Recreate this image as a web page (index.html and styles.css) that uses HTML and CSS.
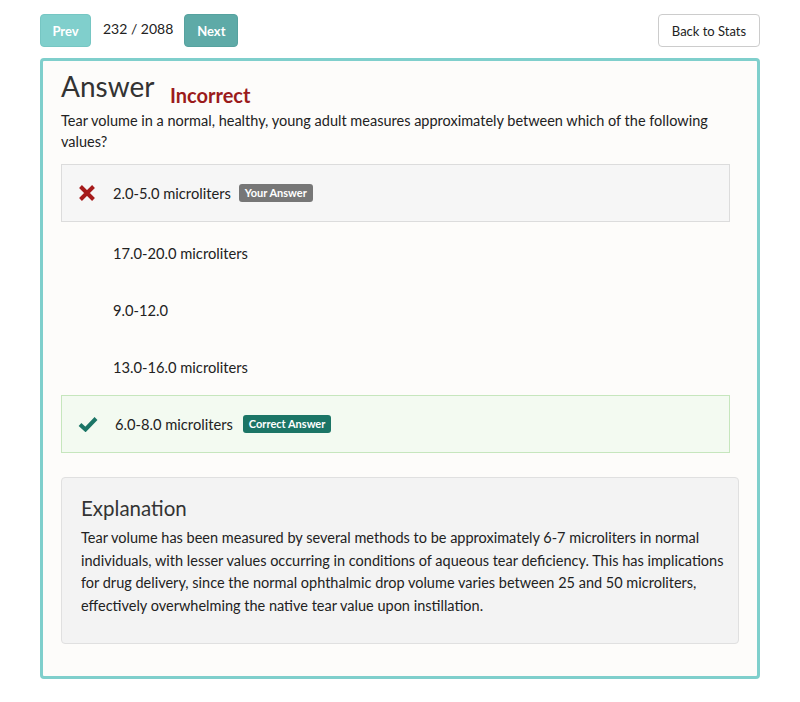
FILE: index.html
```html
<!DOCTYPE html>
<html>
<head>
<meta charset="utf-8">
<link rel="stylesheet" href="styles.css">
</head>
<body>
<div class="page">
  <div class="topbar">
    <div class="pager">
      <button class="btn btn-prev">Prev</button>
      <span class="count">232 / 2088</span>
      <button class="btn btn-next">Next</button>
    </div>
    <button class="btn btn-back">Back to Stats</button>
  </div>
  <div class="card">
    <h1 class="title">Answer <span class="status">Incorrect</span></h1>
    <p class="question">Tear volume in a normal, healthy, young adult measures approximately between which of the following values?</p>
    <div class="options">
      <div class="option boxed wrong">
        <span class="icon"><svg width="18" height="16" viewBox="0 0 18 16"><path d="M2.5 1.5 L15.5 14.5 M15.5 1.5 L2.5 14.5" stroke="#a61b1b" stroke-width="4" stroke-linecap="butt" fill="none"/></svg></span>
        <span class="text">2.0-5.0 microliters</span>
        <span class="label label-gray">Your Answer</span>
      </div>
      <div class="option first-plain"><span class="icon"></span><span class="text">17.0-20.0 microliters</span></div>
      <div class="option"><span class="icon"></span><span class="text">9.0-12.0</span></div>
      <div class="option"><span class="icon"></span><span class="text">13.0-16.0 microliters</span></div>
      <div class="option boxed right">
        <span class="icon"><svg width="20" height="16" viewBox="0 0 20 16"><path d="M2 8.5 L7.5 13.5 L18 2.5" stroke="#1b7566" stroke-width="4" fill="none"/></svg></span>
        <span class="text">6.0-8.0 microliters</span>
        <span class="label label-green">Correct Answer</span>
      </div>
    </div>
    <div class="explain">
      <h2>Explanation</h2>
      <p>Tear volume has been measured by several methods to be approximately 6-7 microliters in normal<br>individuals, with lesser values occurring in conditions of aqueous tear deficiency. This has implications<br>for drug delivery, since the normal ophthalmic drop volume varies between 25 and 50 microliters,<br>effectively overwhelming the native tear value upon instillation.</p>
    </div>
  </div>
</div>
</body>
</html>
```
FILE: styles.css
```css
* { box-sizing: border-box; }
body {
  margin: 0;
  background: #ffffff;
  font-family: Lato, "Open Sans", sans-serif;
  color: #222;
}
.page {
  padding: 14px 40px 24px 40px;
}
.topbar {
  display: flex;
  justify-content: space-between;
  align-items: center;
  height: 33px;
}
.pager {
  display: flex;
  align-items: center;
}
.btn {
  height: 33px;
  border-radius: 4px;
  font-family: Lato, sans-serif;
  font-size: 13px;
  padding: 0 12px;
  cursor: pointer;
}
.btn-prev {
  background: #80cfcc;
  border: 1px solid #76c6c3;
  color: #fff;
  font-weight: bold;
  width: 51px;
  padding: 0;
}
.btn-next {
  background: #5eaaa7;
  border: 1px solid #56a29f;
  color: #fff;
  font-weight: bold;
  width: 54px;
  padding: 0;
}
.count {
  font-size: 14px;
  color: #222;
  margin: 0 11px 0 12px;
  position: relative;
  top: -2px;
}
.btn-back {
  background: #fff;
  border: 1px solid #cccccc;
  color: #222;
  width: 102px;
  padding: 0;
}
.card {
  margin-top: 11px;
  border: 3px solid #7fcfcc;
  border-radius: 4px;
  background: #fdfcfa;
  padding: 9px 18px 32px 18px;
}
.title {
  margin: 0;
  font-size: 28px;
  font-weight: normal;
  line-height: 33px;
  color: #333;
}
.status {
  font-size: 20px;
  font-weight: bold;
  color: #9b1b1b;
  margin-left: 9px;
  line-height: 0;
  vertical-align: -6px;
}
.question {
  margin: 7px 0 12px 0;
  font-size: 14.5px;
  line-height: 21px;
  color: #222;
}
.options {
  display: flex;
  flex-direction: column;
  margin-right: 9px;
}
.option {
  display: flex;
  align-items: center;
  height: 57px;
  padding-left: 17px;
  font-size: 14.7px;
}
.option.boxed {
  height: 58px;
  padding-left: 16px;
}
.option.first-plain { margin-top: 2px; }
.option.wrong {
  background: #f6f6f6;
  border: 1px solid #dcdcdc;
}
.option.right {
  background: #f3faf1;
  border: 1px solid #c6e6bd;
}
.icon {
  width: 35px;
  display: flex;
  align-items: center;
}
.option.right .icon { width: 37px; }
.text { color: #222; }
.label {
  display: inline-block;
  font-size: 11px;
  font-weight: bold;
  color: #fff;
  border-radius: 3px;
  padding: 2px 6px 3px;
  margin-left: 8px;
  line-height: 13px;
}
.label-gray { background: #777777; }
.label-green { background: #1b7566; margin-left: 10px; }
.explain {
  margin-top: 24px;
  background: #f3f3f3;
  border: 1px solid #e0e0e0;
  border-radius: 4px;
  padding: 17px 17px 26px 19px;
}
.explain h2 {
  margin: 0;
  font-size: 20.5px;
  font-weight: normal;
  line-height: 26px;
  color: #333;
}
.explain p {
  margin: 6px 0 0 0;
  font-size: 14.5px;
  line-height: 22.6px;
  color: #222;
  white-space: nowrap;
}
```
